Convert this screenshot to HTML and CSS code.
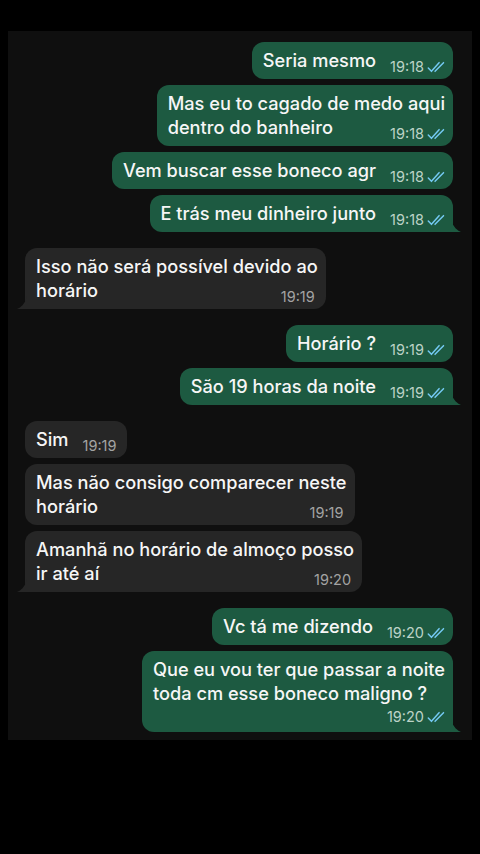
FILE: index.html
```html
<!DOCTYPE html>
<html lang="pt-BR">
<head>
    <meta charset="UTF-8">
    <meta name="viewport" content="width=device-width, initial-scale=1.0">
    <title>Conversa</title>
    <link rel="stylesheet" href="styles.css">
</head>
<body>
    <div class="chat">
        <!--enviadas-->
        <div class="msg out">Seria mesmo<span class="meta"><span class="time">19:18</span><svg class="ticks" viewBox="0 0 17 11"><path d="M1.2 6.4l3 3.2L11.4 1.4M7.6 9.6L15.6 1.4"/></svg></span></div>
        <div class="msg out">Mas eu to cagado de medo aqui<br>dentro do banheiro<span class="meta"><span class="time">19:18</span><svg class="ticks" viewBox="0 0 17 11"><path d="M1.2 6.4l3 3.2L11.4 1.4M7.6 9.6L15.6 1.4"/></svg></span></div>
        <div class="msg out">Vem buscar esse boneco agr<span class="meta"><span class="time">19:18</span><svg class="ticks" viewBox="0 0 17 11"><path d="M1.2 6.4l3 3.2L11.4 1.4M7.6 9.6L15.6 1.4"/></svg></span></div>
        <div class="msg out tail">E trás meu dinheiro junto<span class="meta"><span class="time">19:18</span><svg class="ticks" viewBox="0 0 17 11"><path d="M1.2 6.4l3 3.2L11.4 1.4M7.6 9.6L15.6 1.4"/></svg></span></div>

        <!--recebida-->
        <div class="msg in tail group">Isso não será possível devido ao<br>horário<span class="meta"><span class="time">19:19</span></span></div>

        <div class="msg out group">Horário ?<span class="meta"><span class="time">19:19</span><svg class="ticks" viewBox="0 0 17 11"><path d="M1.2 6.4l3 3.2L11.4 1.4M7.6 9.6L15.6 1.4"/></svg></span></div>
        <div class="msg out tail">São 19 horas da noite<span class="meta"><span class="time">19:19</span><svg class="ticks" viewBox="0 0 17 11"><path d="M1.2 6.4l3 3.2L11.4 1.4M7.6 9.6L15.6 1.4"/></svg></span></div>

        <div class="msg in group">Sim<span class="meta"><span class="time">19:19</span></span></div>
        <div class="msg in">Mas não consigo comparecer neste<br>horário<span class="meta"><span class="time">19:19</span></span></div>
        <div class="msg in tail">Amanhã no horário de almoço posso<br>ir até aí<span class="meta"><span class="time">19:20</span></span></div>

        <div class="msg out group">Vc tá me dizendo<span class="meta"><span class="time">19:20</span><svg class="ticks" viewBox="0 0 17 11"><path d="M1.2 6.4l3 3.2L11.4 1.4M7.6 9.6L15.6 1.4"/></svg></span></div>
        <div class="msg out tail wrap">Que eu vou ter que passar a noite<br>toda cm esse boneco maligno ?<span class="meta"><span class="time">19:20</span><svg class="ticks" viewBox="0 0 17 11"><path d="M1.2 6.4l3 3.2L11.4 1.4M7.6 9.6L15.6 1.4"/></svg></span></div>
    </div>
</body>
</html>
```

FILE: styles.css
```css
*{
    margin: 0;
    padding: 0;
    box-sizing: border-box;
}

html, body{
    background-color: #000;
}

body{
    width: 480px;
    height: 854px;
    padding-top: 31px;
    font-family: Inter, "Noto Sans", "Liberation Sans", sans-serif;
    overflow: hidden;
}

.chat{
    width: 464px;
    margin-left: 8px;
    padding: 11px 19px 8px 17px;
    background-color: #0f0f0f;

    /*消息列*/
    display: flex;
    flex-direction: column;
    gap: 6px;
}

.msg{
    position: relative;
    padding: 6px 8px 7px 11px;
    border-radius: 12px;
    font-size: 18.2px;
    font-weight: 500;
    line-height: 24px;
    color: #f6f6f6;
}

.msg.out{
    align-self: flex-end;
    background-color: #1d5a41;
}

.msg.in{
    align-self: flex-start;
    background-color: #262626;
}

.msg.group{
    margin-top: 10px;
}

/*时间和勾*/
.meta{
    float: right;
    display: flex;
    align-items: center;
    gap: 3px;
    height: 16px;
    margin: 11px 0 -4px 14px;
    font-size: 14.5px;
    font-weight: 400;
    line-height: 16px;
}

.msg.in .meta{
    margin-right: 3px;
}

.out .time{
    color: #bcd3c7;
}

.in .time{
    color: #a3a3a3;
}

.ticks{
    width: 18px;
    height: 12px;
    fill: none;
    stroke: #74c9f2;
    stroke-width: 1.4;
    stroke-linecap: round;
    stroke-linejoin: round;
}

.msg.wrap .meta{
    float: none;
    justify-content: flex-end;
    margin: 4px 0 0;
}

/*尾巴*/
.msg.tail.out{
    border-bottom-right-radius: 2px;
}

.msg.tail.in{
    border-bottom-left-radius: 2px;
}

.msg.tail::after{
    content: '';
    position: absolute;
    bottom: 0;
    width: 10px;
    height: 13px;
    background-color: inherit;
}

.msg.tail.out::after{
    right: -8px;
    clip-path: polygon(0 0, 20% 45%, 45% 72%, 75% 90%, 100% 100%, 0 100%);
}

.msg.tail.in::after{
    left: -8px;
    clip-path: polygon(100% 0, 80% 45%, 55% 72%, 25% 90%, 0 100%, 100% 100%);
}
```
